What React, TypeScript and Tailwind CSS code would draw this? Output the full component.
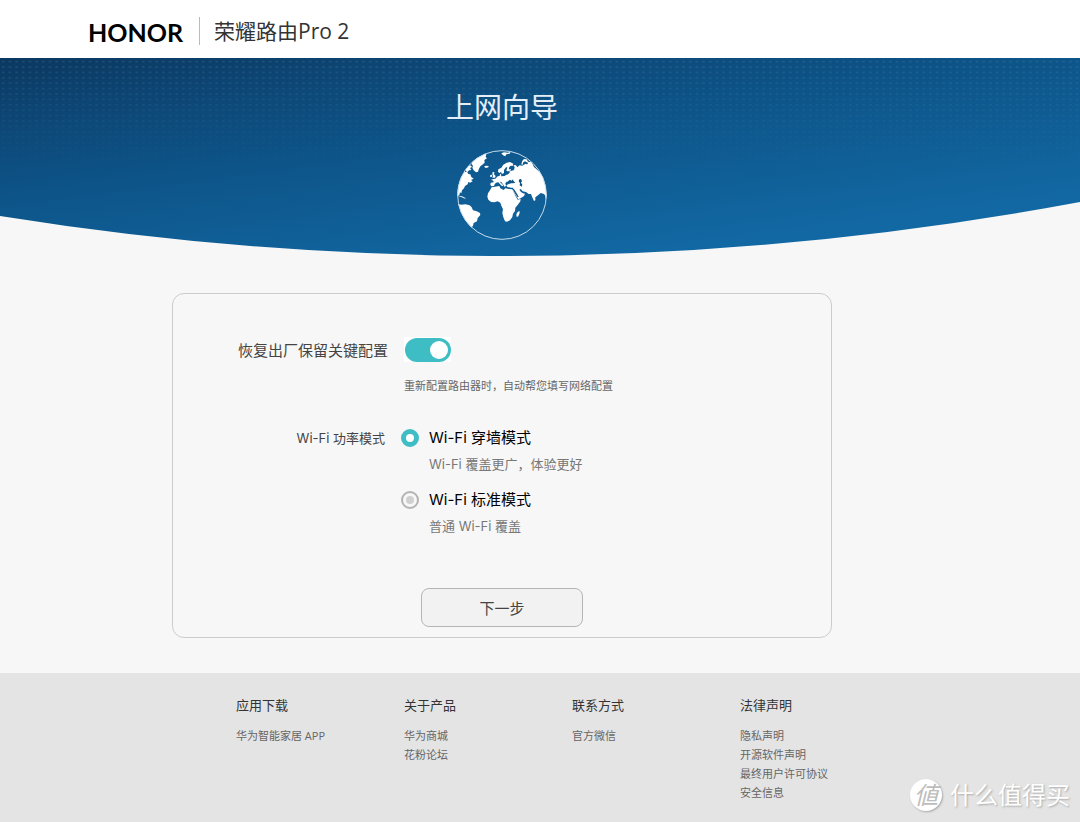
import React, { useState } from 'react';

interface PowerMode {
  id: string;
  title: string;
  description: string;
}

interface FooterColumn {
  title: string;
  links: string[];
}

const powerModes: PowerMode[] = [
  { id: 'wall', title: 'Wi-Fi 穿墙模式', description: 'Wi-Fi 覆盖更广，体验更好' },
  { id: 'standard', title: 'Wi-Fi 标准模式', description: '普通 Wi-Fi 覆盖' },
];

const footerColumns: FooterColumn[] = [
  { title: '应用下载', links: ['华为智能家居 APP'] },
  { title: '关于产品', links: ['华为商城', '花粉论坛'] },
  { title: '联系方式', links: ['官方微信'] },
  { title: '法律声明', links: ['隐私声明', '开源软件声明', '最终用户许可协议', '安全信息'] },
];

const HeroBackground: React.FC = () => (
  <svg
    className="absolute inset-0 h-full w-full"
    viewBox="0 0 1080 198"
    preserveAspectRatio="none"
    aria-hidden="true"
  >
    <defs>
      <linearGradient id="hero-fill" gradientUnits="userSpaceOnUse" x1="0" y1="0" x2="37" y2="275">
        <stop offset="0" stopColor="#0b3860" />
        <stop offset="0.22" stopColor="#0d4675" />
        <stop offset="0.5" stopColor="#0d5488" />
        <stop offset="1" stopColor="#1268a3" />
      </linearGradient>
      <linearGradient id="dot-fade" x1="0" y1="0" x2="0" y2="1">
        <stop offset="0" stopColor="#fff" />
        <stop offset="0.6" stopColor="#000" />
      </linearGradient>
      <mask id="dot-mask">
        <rect width="1080" height="198" fill="url(#dot-fade)" />
      </mask>
      <pattern id="dots" width="6.67" height="5.4" patternUnits="userSpaceOnUse">
        <ellipse cx="3.3" cy="3.6" rx="1.5" ry="1" fill="#5fa3c4" fillOpacity="0.2" />
      </pattern>
    </defs>
    <path d="M0 0H1080V144Q540 244.5 0 158Z" fill="url(#hero-fill)" />
    <rect width="1080" height="140" fill="url(#dots)" mask="url(#dot-mask)" />
  </svg>
);

const Globe: React.FC = () => (
  <svg className="h-[100px] w-[100px]" viewBox="0 0 300 300" aria-hidden="true">
    <defs>
      <clipPath id="globe-clip">
        <circle cx="150" cy="150" r="134" />
      </clipPath>
    </defs>
    <g clipPath="url(#globe-clip)" fill="#fff">
      {/* Greenland, Iceland */}
      <path d="M60 52L66 38 78 26 92 20 103 28 101 36 105 40 97 45 98 53 91 59 85 64 81 71 78 80 72 82 65 76 61 68 63 62 59 58Z" />
      <path d="M97 64L102 62 110 63 109 67 102 69 98 67Z" />
      {/* North America */}
      <path d="M40 72L47 64 55 61 60 66 54 69 58 75 51 76 47 81 42 79Z" />
      <path d="M28 92L37 81 45 80 49 87 55 88 58 96 65 101 57 105 62 109 54 113 49 111 47 118 39 123 36 130 30 136 28 145 24 142 22 150 12 156 10 120Z" />
      <path d="M20 152L30 154 39 158 42 161 36 160 28 156 20 154Z" />
      {/* South America */}
      <path d="M12 176L28 179 40 178 53 181 59 187 63 196 74 199 84 204 85 210 77 219 75 229 65 234 63 242 58 248 30 248Z" />
      {/* Arctic islands */}
      <path d="M148 25L156 22 168 23 176 20 173 26 163 28 160 34 153 31Z" />
      <path d="M208 58L211 47 216 42 224 43 228 50 239 52 242 62 236 62 231 55 223 51 219 49 214 52 211 60Z" />
      {/* British Isles */}
      <path d="M122 81L127 82 126 88 131 93 129 98 121 98 123 93 121 88Z" />
      <path d="M115 90L120 89 120 95 114 96Z" />
      {/* Scandinavia */}
      <path d="M138 80L139 73 148 68 154 59 164 53 174 51 184 56 182 63 176 62 172 66 170 73 176 73 178 76 167 79 163 77 166 67 162 67 156 75 156 84 150 87 147 81 142 84Z" />
      {/* Europe and Asia */}
      <path d="M117 104L125 102 130 101 137 94 143 93 144 86 148 89 147 94 158 93 165 88 168 81 177 78 186 75 188 67 184 60 192 61 196 67 203 61 211 62 219 57 226 58 230 52 242 58 246 66 262 80 290 115 290 165 281 160 279 150 274 146 266 144 258 151 250 157 250 166 246 168 240 155 237 147 230 147 222 141 212 139 206 132 202 134 207 141 213 145 219 146 216 153 207 159 199 163 194 155 187 145 183 137 184 128 177 128 166 126 163 121 170 117 178 115 178 111 172 109 164 110 160 115 162 122 158 126 154 119 148 111 143 110 154 121 151 124 147 121 139 112 132 113 128 118 126 123 118 124 115 119 116 113 125 112 124 107Z" />
      {/* Africa */}
      <path d="M119 127L129 125 142 123 145 130 155 135 160 130 170 132 181 133 185 142 191 154 197 164 206 162 205 169 197 180 190 188 189 198 183 206 181 216 174 226 165 230 159 229 154 217 151 204 153 193 148 182 145 173 137 169 127 172 117 171 109 164 106 155 108 145 114 136Z" />
      <path d="M202 197L203 204 199 214 194 216 193 209 195 203Z" />
    </g>
    {/* Black Sea, Caspian and Red Sea shapes over the land */}
    <g clipPath="url(#globe-clip)" fill="#0f5587">
      <path d="M169 108L174 104 179 107 183 103 184 107 190 113 183 115 174 114 168 114Z" />
      <path d="M202 103L207 102 210 108 207 113 211 119 209 125 203 121 204 114 200 109Z" />
      <path d="M182 133L186 132 195 146 200 155 197 157 190 147Z" />
      <path d="M168 80L174 81 170 86 164 90 163 85Z" />
    </g>
    <circle cx="150" cy="150" r="133" fill="none" stroke="#c5dbea" strokeWidth="3" />
  </svg>
);

const Watermark: React.FC = () => (
  <div className="pointer-events-none absolute right-[10px] bottom-[9px] flex items-center gap-2 text-white">
    <span className="flex h-8 w-8 items-center justify-center rounded-full bg-white text-2xl leading-none text-[#bdbdbd] italic shadow-[1px_1px_2px_#aaaaaa]">
      値
    </span>
    <span className="text-2xl leading-9 [text-shadow:1px_1px_2px_#aaaaaa]">什么值得买</span>
  </div>
);

const App: React.FC = () => {
  const [keepConfig, setKeepConfig] = useState(true);
  const [mode, setMode] = useState('wall');

  return (
    <div
      lang="zh-CN"
      className="relative flex min-h-screen flex-col bg-[#f7f7f7] font-['Open_Sans','Noto_Sans_CJK_SC',sans-serif] text-[#444444]"
    >
      <header className="flex h-[58px] items-center bg-white pt-1 pl-[88px]">
        <span className="pt-px font-[Lato] text-[25px] leading-8 font-bold text-black">HONOR</span>
        <span className="ml-4 h-7 w-px bg-[#bbbbbb]"></span>
        <span className="ml-[14px] text-[21px] leading-8 text-[#333333]">荣耀路由Pro 2</span>
      </header>

      <section className="relative">
        <HeroBackground />
        <div className="relative flex flex-col items-center pt-[29px] pr-[76px] pb-[11px]">
          <h1 className="text-[28px] leading-10 text-[#e3eef7]">上网向导</h1>
          <div className="mt-[18px]">
            <Globe />
          </div>
        </div>
      </section>

      <main className="pt-[37px] pr-[76px] pb-[35px]">
        <form
          className="mx-auto w-full max-w-[660px] rounded-xl border border-[#cccccc] pt-[43px] pb-[10px]"
          onSubmit={(e) => e.preventDefault()}
        >
          <div className="flex items-start gap-4">
            <label htmlFor="keep-config" className="w-[215px] shrink-0 pt-px text-right text-[15px] leading-[25px]">
              恢复出厂保留关键配置
            </label>
            <div>
              <span className="relative block w-[47px] bg-white pt-px pl-px">
                <input
                  id="keep-config"
                  type="checkbox"
                  role="switch"
                  checked={keepConfig}
                  onChange={(e) => setKeepConfig(e.target.checked)}
                  className="peer block h-6 w-[46px] cursor-pointer appearance-none rounded-full bg-[#bbbbbb] checked:bg-[#3fbdc4]"
                />
                <span className="pointer-events-none absolute top-1 left-1 h-[18px] w-[18px] rounded-full bg-white peer-checked:left-[26px]"></span>
              </span>
              <p className="mt-4 text-[11px] leading-4 text-[#666666]">重新配置路由器时，自动帮您填写网络配置</p>
            </div>
          </div>

          <div
            role="radiogroup"
            aria-labelledby="power-label"
            className="mt-8 flex items-start gap-4 font-['Inter','Noto_Sans_CJK_SC',sans-serif]"
          >
            <span id="power-label" className="w-[212px] shrink-0 text-right text-[13px] leading-6">
              Wi-Fi 功率模式
            </span>
            <div className="flex flex-col gap-[14px]">
              {powerModes.map((item) => (
                <div key={item.id}>
                  <label className="flex cursor-pointer items-center gap-[10px] text-[15px] leading-6 text-black">
                    <input
                      type="radio"
                      name="power-mode"
                      value={item.id}
                      checked={mode === item.id}
                      onChange={() => setMode(item.id)}
                      className="h-[18px] w-[18px] appearance-none rounded-full border-2 border-[#b3b3b3] bg-[#d0d0d0] bg-clip-content p-[3px] checked:border-[5px] checked:border-[#3fbdc4] checked:bg-white checked:p-0"
                    />
                    {item.title}
                  </label>
                  <p className="mt-1 pl-7 text-[13px] leading-5 text-[#777777]">{item.description}</p>
                </div>
              ))}
            </div>
          </div>

          <button
            type="submit"
            className="mx-auto mt-[52px] block h-[39px] w-[162px] cursor-pointer rounded-lg border border-[#b5b5b5] bg-[#f2f2f2] text-[15px] leading-5 hover:bg-[#ebebeb]"
          >
            下一步
          </button>
        </form>
      </main>

      <footer className="grow bg-[#e4e4e4] pt-[22px] pr-[76px] pb-5">
        <div className="mx-auto grid w-full max-w-[660px] grid-cols-[168px_168px_168px_1fr] pl-16">
          {footerColumns.map((column) => (
            <div key={column.title}>
              <h2 className="text-[13px] leading-5 text-[#333333]">{column.title}</h2>
              <ul className="mt-[11px] text-[11px] leading-[19px] text-[#666666]">
                {column.links.map((link) => (
                  <li key={link}>
                    <a href="#" className="hover:underline">{link}</a>
                  </li>
                ))}
              </ul>
            </div>
          ))}
        </div>
      </footer>

      <Watermark />
    </div>
  );
};

export default App;
